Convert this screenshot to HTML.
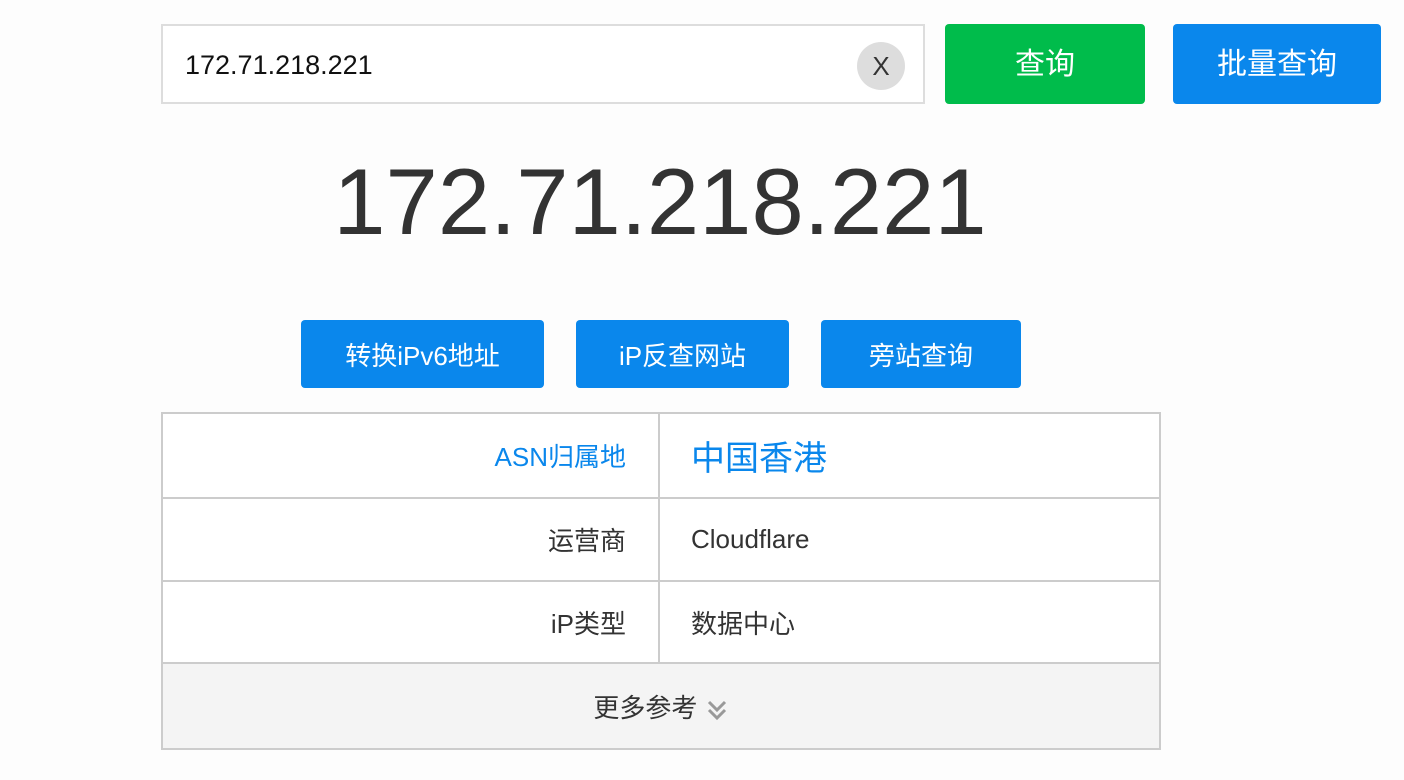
<!DOCTYPE html>
<html><head><meta charset="utf-8"><style>
body{margin:0;width:1404px;height:780px;background:#fdfdfd;font-family:"Liberation Sans","Noto Sans CJK SC",sans-serif;position:relative;overflow:hidden}
.abs{position:absolute;box-sizing:border-box}
.inp{left:161px;top:24px;width:764px;height:80px;border:2px solid #ddd;background:#fff}
.inp span{position:absolute;left:22px;top:24px;font-size:27px;color:#111}
.x{left:857px;top:42px;width:48px;height:48px;border-radius:50%;background:#ddd;color:#333;font-size:26px;text-align:center;line-height:48px}
.btn{color:#fff;text-align:center;border-radius:4px}
.big{left:0;width:1320px;top:148px;text-align:center;font-size:94px;color:#333}
td{border:2px solid #ccc;font-size:26px;color:#333;padding:0;box-sizing:border-box}
table{border-collapse:collapse;table-layout:fixed;position:absolute;left:161px;top:412px;width:1000px;background:#fff}
</style></head><body>
<div class="abs inp"><span>172.71.218.221</span></div>
<div class="abs x">X</div>
<div class="abs btn" style="left:945px;top:24px;width:200px;height:80px;background:#00bc4b;font-size:30px;line-height:82px">查询</div>
<div class="abs btn" style="left:1173px;top:24px;width:208px;height:80px;background:#0a87ec;font-size:30px;line-height:82px">批量查询</div>
<div class="abs big">172.71.218.221</div>
<div class="abs btn" style="left:301px;top:320px;width:243px;height:68px;background:#0a87ec;font-size:26px;line-height:72px">转换iPv6地址</div>
<div class="abs btn" style="left:576px;top:320px;width:213px;height:68px;background:#0a87ec;font-size:26px;line-height:72px">iP反查网站</div>
<div class="abs btn" style="left:821px;top:320px;width:200px;height:68px;background:#0a87ec;font-size:26px;line-height:72px">旁站查询</div>
<table>
<colgroup><col style="width:497px"><col></colgroup>
<tr style="height:85px"><td style="text-align:right;padding-right:32px;color:#0a87ec">ASN归属地</td><td style="padding-left:31px;color:#0a87ec;font-size:34px">中国香港</td></tr>
<tr style="height:83px"><td style="text-align:right;padding-right:32px">运营商</td><td style="padding-left:31px">Cloudflare</td></tr>
<tr style="height:82px"><td style="text-align:right;padding-right:32px">iP类型</td><td style="padding-left:31px">数据中心</td></tr>
<tr style="height:86px"><td colspan="2" style="background:#f4f4f4;text-align:center">更多参考 <svg width="24" height="26" viewBox="0 0 24 26" style="vertical-align:-6px"><path d="M4 5l8 8 8-8M4 13l8 8 8-8" fill="none" stroke="#999" stroke-width="3"/></svg></td></tr>
</table>
</body></html>
